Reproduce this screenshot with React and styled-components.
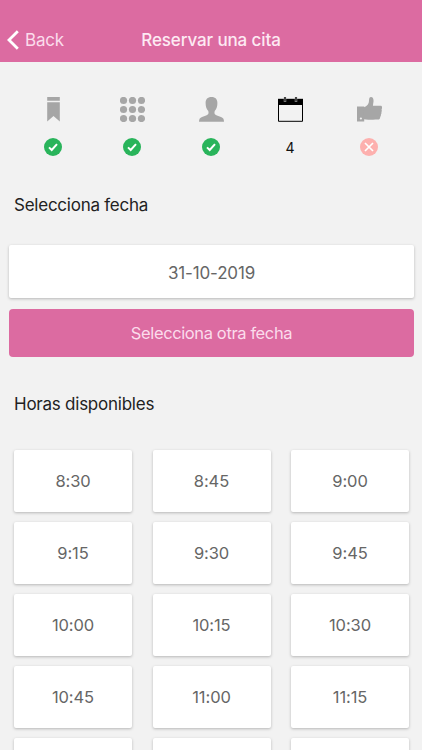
import React from "react";
import styled, { createGlobalStyle } from "styled-components";

const pink = "#dc6ba1";
const grey = "#a6a6a6";

const GlobalStyle = createGlobalStyle`
  * {
    box-sizing: border-box;
  }

  body {
    margin: 0;
    background: #f2f2f2;
    font-family: Inter, "Liberation Sans", sans-serif;
    overflow: hidden;
  }

  button {
    font-family: inherit;
    cursor: pointer;
  }
`;

const StyledScreen = styled.div`
  height: 750px;
  overflow: hidden;
`;

const StyledHeader = styled.header`
  display: grid;
  grid-template-columns: 100px 1fr 100px;
  align-items: center;
  height: 62px;
  padding-top: 17px;
  background: ${pink};
`;

const StyledBack = styled.button`
  display: flex;
  align-items: center;
  gap: 6px;
  padding: 0 0 0 7px;
  border: none;
  background: none;
  color: #fbdcec;
  font-size: 17px;
  letter-spacing: -0.2px;
  line-height: 22px;
`;

const StyledTitle = styled.h1`
  margin: 0;
  color: #fdeaf3;
  font-size: 17px;
  font-weight: 500;
  letter-spacing: -0.12px;
  line-height: 22px;
  text-align: center;
  white-space: nowrap;
`;

const StyledSteps = styled.div`
  display: grid;
  grid-template-columns: repeat(5, 79px);
  justify-content: center;
  padding-top: 35px;
`;

const StyledStep = styled.div`
  display: flex;
  flex-direction: column;
  align-items: center;
  gap: 16px;
  color: ${(props) => (props.$active ? "#000" : grey)};
`;

const StyledStatus = styled.div`
  display: flex;
  align-items: center;
  justify-content: center;
  height: 18px;
  font-size: 14px;
  color: #111;
`;

const StyledHeading = styled.h2`
  margin: ${(props) => props.$top}px 0 0 14px;
  color: #222;
  font-size: 17px;
  font-weight: 400;
  letter-spacing: -0.24px;
  line-height: 24px;
`;

const StyledDate = styled.div`
  display: flex;
  align-items: center;
  justify-content: center;
  height: 53px;
  margin: 28px 8px 0 9px;
  padding-top: 2px;
  border-radius: 2px;
  background: #fff;
  box-shadow: 0 1px 3px rgba(0, 0, 0, 0.25);
  color: #666;
  font-size: 17px;
  letter-spacing: -0.15px;
`;

const StyledChange = styled.button`
  display: block;
  width: 405px;
  height: 48px;
  margin: 11px 0 0 9px;
  padding: 0;
  border: none;
  border-radius: 4px;
  background: ${pink};
  color: #fbdcec;
  font-size: 16.5px;
  letter-spacing: -0.38px;
`;

const StyledHours = styled.div`
  display: grid;
  grid-template-columns: repeat(3, 118px);
  justify-content: space-between;
  row-gap: 10px;
  margin: 34px 13px 0 14px;
`;

const StyledHour = styled.button`
  height: 62px;
  padding: 0;
  border: none;
  border-radius: 2px;
  background: #fff;
  box-shadow: 0 1px 3px rgba(0, 0, 0, 0.25);
  color: #666;
  font-size: 16.5px;
  letter-spacing: -0.1px;
`;

const Icon = ({ children }) => (
  <svg width="25" height="25" viewBox="0 0 25 25" fill="currentColor">
    {children}
  </svg>
);

const BookmarkIcon = () => (
  <Icon>
    <path d="M6.200 0h12.600v3.700H6.200zM6.200 5.200h12.600v19.300l-6.300-5.600-6.300 5.600z" />
  </Icon>
);

const GridIcon = () => (
  <Icon>
    {[3.5, 12.5, 21.5].map((y) =>
      [3.5, 12.5, 21.5].map((x) => <circle key={x + "-" + y} cx={x} cy={y} r="3.6" />)
    )}
  </Icon>
);

const PersonIcon = () => (
  <Icon>
    <path d="M12.500 0C8.500 0 6.600 2.300 6.600 5.900c0 3.500 1 6.300 2.700 8.200.7 2.800 0 3.700-2.200 4.500l-4.100 1.400C1 20.700 0 22 0 24.800h25c0-2.800-1-4.100-3-4.800l-4.100-1.400c-2.200-.8-2.900-1.700-2.200-4.500C17.400 12.200 18.400 9.400 18.400 5.900 18.400 2.300 16.500 0 12.500 0z" />
  </Icon>
);

const CalendarIcon = () => (
  <Icon>
    <path d="M0 1.800h25v6.200H0z" />
    <path d="M.5 7v17.300h24V7" fill="none" stroke="currentColor" />
    <path d="M7 0v5M18 0v5" stroke="#aaa" strokeWidth="2.400" />
    <path d="M7 0v4.500M18 0v4.500" stroke="currentColor" strokeWidth="1.200" />
  </Icon>
);

const ThumbIcon = () => (
  <Icon>
    <path
      fillRule="evenodd"
      d="M0 9.500h7.200v15H0zM2.800 21.500a1.100 1.100 0 1 0 2.200 0a1.100 1.100 0 1 0-2.200 0z"
    />
    <path d="M6.900 10.200c3.900-1.200 5-3.700 5.100-6.700C12.100 1 12.700 0 14 0c2.200 0 2.900 2.700 2.400 5.300L15.900 8.700h7.600c1.300 0 1.700 1 1.500 2.300-.1.700-.2 1.200-.5 1.500.4.700.4 1.800-.1 2.500.2.900 0 1.800-.5 2.500.2 1-.1 1.900-.7 2.400 0 1.700-.8 2.600-2.400 2.700-4 .3-9.800.2-13.900-.4z" />
  </Icon>
);

const DoneIcon = () => (
  <svg width="18" height="18" viewBox="0 0 18 18" fill="none">
    <circle cx="9" cy="9" r="9" fill="#29b45b" />
    <path d="M5 9.400l2.700 2.600 5.300-5.900" stroke="#fff" strokeWidth="2" />
  </svg>
);

const PendingIcon = () => (
  <svg width="18" height="18" viewBox="0 0 18 18" fill="none">
    <circle cx="9" cy="9" r="9" fill="#fdb0ae" />
    <path d="M5 5l8 8M13 5l-8 8" stroke="#fff" strokeWidth="1.700" />
  </svg>
);

const steps = [
  { id: "service", icon: <BookmarkIcon />, status: <DoneIcon /> },
  { id: "category", icon: <GridIcon />, status: <DoneIcon /> },
  { id: "person", icon: <PersonIcon />, status: <DoneIcon /> },
  { id: "date", icon: <CalendarIcon />, status: "4", active: true },
  { id: "confirm", icon: <ThumbIcon />, status: <PendingIcon /> },
];

const hours = [
  "8:30", "8:45", "9:00",
  "9:15", "9:30", "9:45",
  "10:00", "10:15", "10:30",
  "10:45", "11:00", "11:15",
  "", "", "",
];

export default function App() {
  return (
    <StyledScreen>
      <GlobalStyle />
      <StyledHeader>
        <StyledBack>
          <svg width="12" height="20" viewBox="0 0 12 20" fill="none">
            <path d="M10.800 1.200L2 10l8.800 8.800" stroke="#fff" strokeWidth="2.800" />
          </svg>
          Back
        </StyledBack>
        <StyledTitle>Reservar una cita</StyledTitle>
      </StyledHeader>
      <StyledSteps>
        {steps.map((step) => (
          <StyledStep key={step.id} $active={step.active}>
            {step.icon}
            <StyledStatus>{step.status}</StyledStatus>
          </StyledStep>
        ))}
      </StyledSteps>
      <StyledHeading $top={37}>Selecciona fecha</StyledHeading>
      <StyledDate>31-10-2019</StyledDate>
      <StyledChange>Selecciona otra fecha</StyledChange>
      <StyledHeading $top={35}>Horas disponibles</StyledHeading>
      <StyledHours>
        {hours.map((hour, index) => (
          <StyledHour key={index}>{hour}</StyledHour>
        ))}
      </StyledHours>
    </StyledScreen>
  );
}
